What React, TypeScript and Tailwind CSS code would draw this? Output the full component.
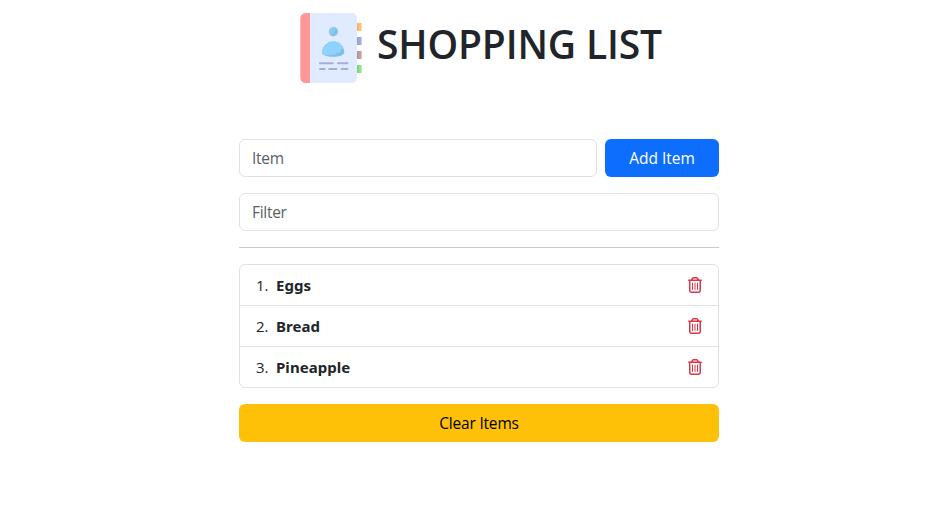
import { useState } from 'react';
import { FaRegTrashCan } from 'react-icons/fa6';

const initialItems = ['Eggs', 'Bread', 'Pineapple'];

function NotebookIcon() {
  return (
    <svg viewBox="0 0 70 70" className="h-[70px] w-[70px] shrink-0" aria-hidden="true">
      <path d="M60 10h5.600v8H60z" fill="#ffc477" />
      <path d="M60 24h5.600v8H60z" fill="#a4afdc" />
      <path d="M60 38h5.600v8H60z" fill="#c6a09e" />
      <path d="M60 52h5.600v8H60z" fill="#8de38a" />
      <path d="M60 10h2.500v8H60zM60 24h2.500v8H60zM60 38h2.500v8H60zM60 52h2.500v8H60z" fill="#000" opacity=".08" />
      <path d="M13 0h43a5 5 0 0 1 5 5v60a5 5 0 0 1-5 5H13z" fill="#e0ebff" />
      <path d="M9.500 0H14v70H9.500A5.200 5.200 0 0 1 4.300 64.800V5.200A5.200 5.200 0 0 1 9.500 0z" fill="#ff9797" />
      <circle cx="37.500" cy="18.700" r="4.700" fill="#8bc9ee" />
      <path d="M39.500 14.500a4.700 4.700 0 0 1-5.500 7.400c4 0 6-3 5.500-7.400z" fill="#7db9df" />
      <path d="M26.200 39.500c0-6.200 5-11.100 11.200-11.100s10.900 4.900 10.900 11.100c0 2.800-5.200 4.300-11 4.300s-11.100-1.500-11.100-4.300z" fill="#7fbfe8" />
      <path d="M26.200 39.500c0-6.200 5-11.100 11.200-11.100 4.500 0 8 2.400 9.500 5.800-1.900 4.900-7.700 8-14.400 8-2.300 0-4.400-.2-6-.9z" fill="#8fd1ff" />
      <path d="M24 50.200h12.700M42 50.200h9.500M24 56h4.700M33.200 56h7.200M45.700 56h5.800" stroke="#a4afd9" strokeWidth="2" strokeLinecap="round" />
    </svg>
  );
}

export default function App() {
  const [items, setItems] = useState(initialItems);
  const [entry, setEntry] = useState('');
  const [filter, setFilter] = useState('');

  const visible = items.filter((i) => i.toLowerCase().includes(filter.toLowerCase()));

  return (
    <div className="min-h-[528px] bg-white pl-[239px] font-['Open_Sans','Segoe_UI',sans-serif] text-base leading-6 text-[#212529]">
      <main className="w-[480px]">
        <header className="flex h-[139px] items-start pt-[13px] pl-[57px]">
          <NotebookIcon />
          <h1 className="pt-[7px] pl-[11px] text-[39px] leading-[48px] font-semibold tracking-[-0.15px] whitespace-nowrap">
            SHOPPING LIST
          </h1>
        </header>
        <form
          className="flex gap-2"
          onSubmit={(e) => {
            e.preventDefault();
            if (entry.trim()) setItems([...items, entry.trim()]);
            setEntry('');
          }}
        >
          <input
            className="h-[38px] min-w-0 flex-1 rounded-md border border-[#dee2e6] px-3 text-[15.500px] tracking-[-0.3px] outline-none placeholder:text-[#595f64]"
            placeholder="Item"
            value={entry}
            onChange={(e) => setEntry(e.target.value)}
          />
          <button type="submit" className="h-[38px] w-[114px] rounded-md bg-[#0d6efd] text-[15.500px] text-white">
            Add Item
          </button>
        </form>
        <input
          className="mt-4 block h-[38px] w-full rounded-md border border-[#dee2e6] px-3 text-[15.500px] tracking-[-0.3px] outline-none placeholder:text-[#595f64]"
          placeholder="Filter"
          value={filter}
          onChange={(e) => setFilter(e.target.value)}
        />
        <hr className="my-4 border-t border-[#c8c9ca]" />
        <ol className="divide-y divide-[#dee2e6] rounded-md border border-[#dee2e6]">
          {visible.map((item, i) => (
            <li key={item} className="flex h-[41px] items-center px-4 last:h-10">
              <span className="w-5 text-[15px]">{i + 1}.</span>
              <span className="flex-1 font-['Noto_Sans',sans-serif] text-[15px] font-bold tracking-[0.05px]">{item}</span>
              <button
                type="button"
                aria-label={`Remove ${item}`}
                className="text-[#dc3545]"
                onClick={() => setItems(items.filter((x) => x !== item))}
              >
                <FaRegTrashCan className="h-4 w-3.5" />
              </button>
            </li>
          ))}
        </ol>
        <button
          type="button"
          className="mt-4 h-[38px] w-full rounded-md bg-[#ffc107] text-[15.500px] tracking-[-0.2px] text-black"
          onClick={() => setItems([])}
        >
          Clear Items
        </button>
      </main>
    </div>
  );
}
